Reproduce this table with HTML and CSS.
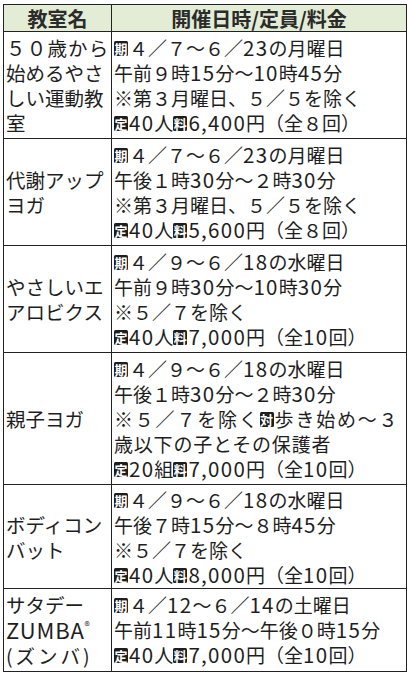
FILE: index.html
```html
<!DOCTYPE html>
<html lang="ja">
<head>
<meta charset="utf-8">
<link rel="stylesheet" href="styles.css">
</head>
<body>
<table class="schedule">
  <thead>
    <tr>
      <th class="col-name">教室名</th>
      <th class="col-info">開催日時/定員/料金</th>
    </tr>
  </thead>
  <tbody>
    <tr>
      <td class="name"><span class="just">５０歳から</span><br>始めるやさ<br>しい運動教<br>室</td>
      <td class="info"><span class="mk">期</span>４／７～６／<span class="n">23</span>の月曜日<br>午前９時<span class="n">15</span>分～<span class="n">10</span>時<span class="n">45</span>分<br>※第３月曜日、５／５を除く<br><span class="mk">定</span><span class="n">40</span>人<span class="mk">料</span><span class="n">6,400</span>円（全８回）</td>
    </tr>
    <tr>
      <td class="name">代謝アップ<br>ヨガ</td>
      <td class="info"><span class="mk">期</span>４／７～６／<span class="n">23</span>の月曜日<br>午後１時<span class="n">30</span>分～２時<span class="n">30</span>分<br>※第３月曜日、５／５を除く<br><span class="mk">定</span><span class="n">40</span>人<span class="mk">料</span><span class="n">5,600</span>円（全８回）</td>
    </tr>
    <tr>
      <td class="name">やさしいエ<br>アロビクス</td>
      <td class="info"><span class="mk">期</span>４／９～６／<span class="n">18</span>の水曜日<br>午前９時<span class="n">30</span>分～<span class="n">10</span>時<span class="n">30</span>分<br>※５／７を除く<br><span class="mk">定</span><span class="n">40</span>人<span class="mk">料</span><span class="n">7,000</span>円（全<span class="n">10</span>回）</td>
    </tr>
    <tr>
      <td class="name">親子ヨガ</td>
      <td class="info"><span class="mk">期</span>４／９～６／<span class="n">18</span>の水曜日<br>午後１時<span class="n">30</span>分～２時<span class="n">30</span>分<br><span class="spread">※５／７を除く<span class="mk">対</span>歩き始め～３</span><br><span class="wide">歳以下の子とその保護者</span><br><span class="mk">定</span><span class="n">20</span>組<span class="mk">料</span><span class="n">7,000</span>円（全<span class="n">10</span>回）</td>
    </tr>
    <tr class="tight">
      <td class="name">ボディコン<br>バット</td>
      <td class="info"><span class="mk">期</span>４／９～６／<span class="n">18</span>の水曜日<br>午後７時<span class="n">15</span>分～８時<span class="n">45</span>分<br>※５／７を除く<br><span class="mk">定</span><span class="n">40</span>人<span class="mk">料</span><span class="n">8,000</span>円（全<span class="n">10</span>回）</td>
    </tr>
    <tr>
      <td class="name">サタデー<br><span class="latin">ZUMBA</span><sup class="reg">®</sup><br><span class="paren">(ズンバ)</span></td>
      <td class="info"><span class="mk">期</span>４／<span class="n">12</span>～６／<span class="n">14</span>の土曜日<br>午前<span class="n">11</span>時<span class="n">15</span>分～午後０時<span class="n">15</span>分<br><span class="mk">定</span><span class="n">40</span>人<span class="mk">料</span><span class="n">7,000</span>円（全<span class="n">10</span>回）</td>
    </tr>
  </tbody>
</table>
</body>
</html>
```

FILE: styles.css
```css
html, body {
  margin: 0;
  padding: 0;
  background: #ffffff;
}

body {
  font-family: "Noto Sans CJK JP", "Noto Sans", sans-serif;
  color: #1e1e1e;
}

.schedule {
  margin: 4px 5px 0 3px;
  width: 404px;
  border-collapse: collapse;
  table-layout: fixed;
}

.schedule th,
.schedule td {
  border: 1.5px solid #222;
}

.schedule th {
  background: #e3ecd5;
  font-size: 20px;
  font-weight: 700;
  line-height: 25px;
  height: 26px;
  padding: 0;
  text-align: center;
  color: #2b2b2b;
}

.col-name {
  width: 107px;
}

.name {
  font-size: 19.5px;
  line-height: 25px;
  padding: 3px 0 3px 2px;
  vertical-align: middle;
  white-space: nowrap;
}

.just {
  letter-spacing: 1.2px;
}

.latin {
  font-size: 22px;
  letter-spacing: 0.8px;
}

.info {
  font-size: 19px;
  line-height: 25px;
  padding: 3px 0 3px 2px;
  vertical-align: top;
  white-space: nowrap;
}

.tight .name,
.tight .info {
  padding-top: 1.5px;
  padding-bottom: 1.5px;
}

.n {
  font-size: 20.5px;
  letter-spacing: 1.3px;
}

.spread {
  letter-spacing: 1.8px;
}

.wide {
  letter-spacing: 0.8px;
}

.mk {
  display: inline-block;
  background: #1e1e1e;
  color: #ffffff;
  font-size: 13px;
  line-height: 15px;
  width: 14px;
  height: 15px;
  text-align: center;
  border-radius: 1.5px;
  vertical-align: 2px;
  margin-right: 1px;
  letter-spacing: 0;
  font-weight: 700;
}

.reg {
  font-size: 11px;
  vertical-align: 9px;
  line-height: 0;
}

.paren {
  letter-spacing: 3px;
}
```
